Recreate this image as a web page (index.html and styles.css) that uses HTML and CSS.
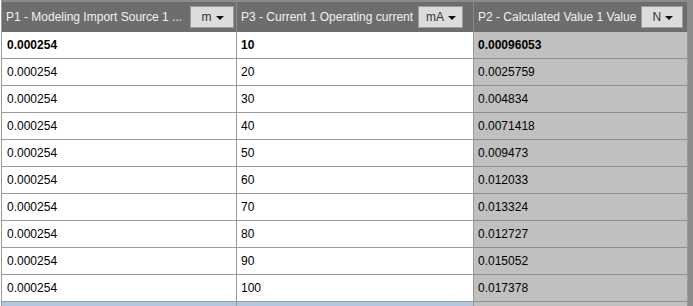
FILE: index.html
```html
<!DOCTYPE html>
<html>
<head>
<meta charset="utf-8">
<link rel="stylesheet" href="styles.css">
</head>
<body>
<div class="frame">
  <div class="grid">
    <div class="hcell">
      <span class="htext">P1 - Modeling Import Source 1 ...</span>
      <span class="unit push">m<i class="caret"></i></span>
    </div>
    <div class="hcell">
      <span class="htext">P3 - Current 1 Operating current</span>
      <span class="unit">mA<i class="caret"></i></span>
    </div>
    <div class="hcell last">
      <span class="htext">P2 - Calculated Value 1 Value</span>
      <span class="unit">N<i class="caret"></i></span>
    </div>

    <div class="cell first b">0.000254</div><div class="cell b">10</div><div class="cell calc b">0.00096053</div>
    <div class="cell first">0.000254</div><div class="cell">20</div><div class="cell calc">0.0025759</div>
    <div class="cell first">0.000254</div><div class="cell">30</div><div class="cell calc">0.004834</div>
    <div class="cell first">0.000254</div><div class="cell">40</div><div class="cell calc">0.0071418</div>
    <div class="cell first">0.000254</div><div class="cell">50</div><div class="cell calc">0.009473</div>
    <div class="cell first">0.000254</div><div class="cell">60</div><div class="cell calc">0.012033</div>
    <div class="cell first">0.000254</div><div class="cell">70</div><div class="cell calc">0.013324</div>
    <div class="cell first">0.000254</div><div class="cell">80</div><div class="cell calc">0.012727</div>
    <div class="cell first">0.000254</div><div class="cell">90</div><div class="cell calc">0.015052</div>
    <div class="cell first">0.000254</div><div class="cell">100</div><div class="cell calc">0.017378</div>

    <div class="tail"></div><div class="tail"></div><div class="tail calc"></div>
  </div>
  <div class="scroll"></div>
</div>
</body>
</html>
```

FILE: styles.css
```css
html, body {
  margin: 0;
  padding: 0;
  background: #ffffff;
  overflow: hidden;
}
body {
  font-family: "Liberation Sans", Arial, sans-serif;
  font-size: 12px;
  color: #000;
}
.frame {
  display: flex;
  width: 693px;
  height: 306px;
  overflow: hidden;
  padding-left: 1px;
  box-sizing: border-box;
}
.grid {
  display: grid;
  grid-template-columns: 235px 237px 214px;
  grid-template-rows: 32px repeat(10, 27px) 20px;
  border-left: 1px solid #9a9a9a;
  flex: none;
}
.hcell {
  display: flex;
  align-items: center;
  background: #6d6d6d;
  border-top: 2px solid #8b8b8b;
  border-right: 1px solid #8a8a8a;
  padding: 0 2px 0 4px;
  color: #f2f2f2;
  min-width: 0;
  box-sizing: border-box;
}
.htext {
  white-space: nowrap;
  flex: 0 1 auto;
  min-width: 0;
}
.unit {
  flex: none;
  display: flex;
  align-items: center;
  justify-content: center;
  gap: 4px;
  min-width: 42px;
  height: 22px;
  margin-left: 5px;
  padding: 0 6px 0 7px;
  box-sizing: border-box;
  background: #dcdcdc;
  border: 1px solid #9d9d9d;
  color: #333;
}
.unit.push {
  margin-left: auto;
  min-width: 44px;
}
.caret {
  width: 0;
  height: 0;
  border-left: 4px solid transparent;
  border-right: 4px solid transparent;
  border-top: 4px solid #111;
  margin-top: 1px;
}
.cell {
  display: flex;
  align-items: center;
  padding-left: 4px;
  border-right: 1px solid #9a9a9a;
  border-bottom: 1px solid #9a9a9a;
  box-sizing: border-box;
  background: #fff;
  white-space: nowrap;
}
.cell.first {
  padding-left: 5px;
}
.cell.calc {
  background: #c0c0c0;
  border-bottom-color: #8f8f8f;
}
.b {
  font-weight: bold;
}
.tail {
  background: #b3c6df;
  border-right: 1px solid #9a9a9a;
}
.tail.calc {
  background: #c0c0c0;
}
.scroll {
  flex: 1;
  background: #8c8c8c;
}
```
